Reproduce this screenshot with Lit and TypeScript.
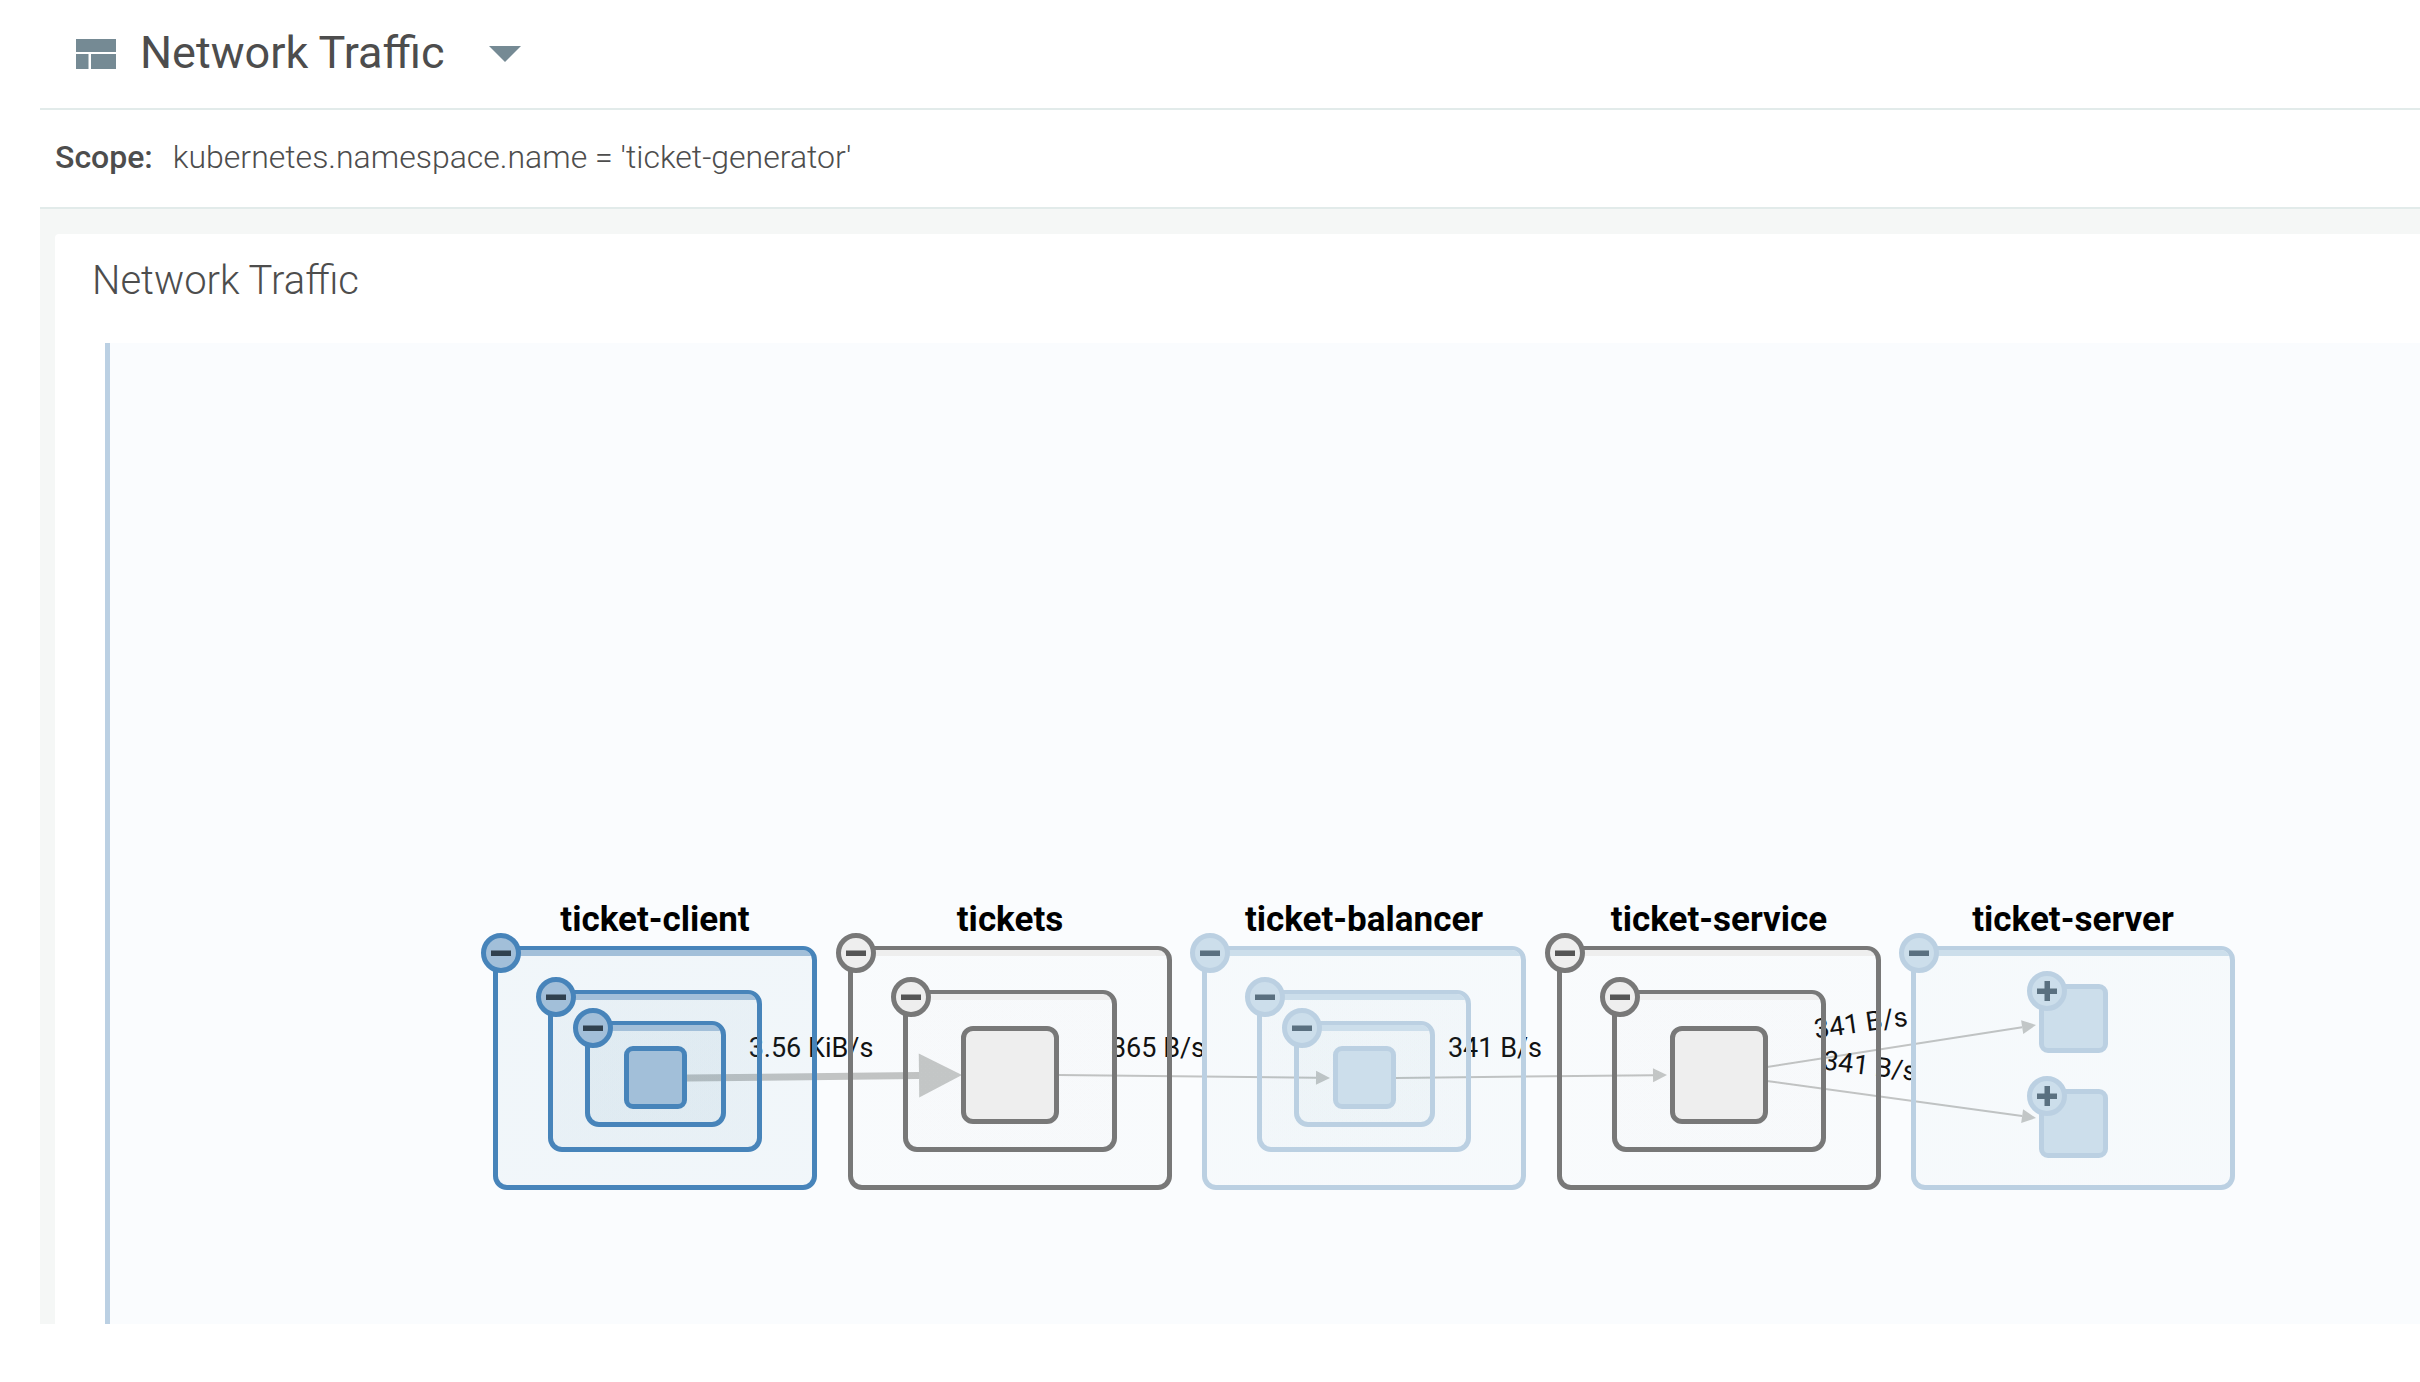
import { LitElement, html, svg, css, nothing } from "lit";
import { customElement, property, state } from "lit/decorators.js";
import { classMap } from "lit/directives/class-map.js";
import { styleMap } from "lit/directives/style-map.js";

type Tone = "strong" | "neutral" | "soft";

interface Box {
  kind: "frame" | "node";
  x: number;
  y: number;
  w: number;
  h: number;
  toggle?: "minus" | "plus";
}

interface Group {
  name: string;
  tone: Tone;
  x: number;
  boxes: Box[];
}

interface Edge {
  from: [number, number];
  to: [number, number];
  width: number;
  head: [number, number];
  label: string;
  at: [number, number];
  angle: number;
}

const frame = (x: number, y: number, w: number, h: number): Box => ({ kind: "frame", x, y, w, h, toggle: "minus" });
const node = (x: number, y: number, w: number, h: number, toggle?: "plus"): Box => ({ kind: "node", x, y, w, h, toggle });

const outer = frame(0, 0, 324, 244);
const middle = frame(55, 44, 214, 162);
const inner = frame(92, 75, 141, 106);
const small = node(131, 100, 63, 63);
const large = node(113, 80, 98, 98);

const groups: Group[] = [
  { name: "ticket-client", tone: "strong", x: 0, boxes: [outer, middle, inner, small] },
  { name: "tickets", tone: "neutral", x: 355, boxes: [outer, middle, large] },
  { name: "ticket-balancer", tone: "soft", x: 709, boxes: [outer, middle, inner, small] },
  { name: "ticket-service", tone: "neutral", x: 1064, boxes: [outer, middle, large] },
  { name: "ticket-server", tone: "soft", x: 1418, boxes: [outer, node(128, 38, 69, 69, "plus"), node(128, 143, 69, 69, "plus")] },
];

const edges: Edge[] = [
  { from: [194, 132], to: [469, 129], width: 7, head: [43, 22], label: "3.56 KiB/s", at: [318, 111], angle: 0 },
  { from: [565, 129], to: [837, 132], width: 2, head: [14, 7], label: "365 B/s", at: [665, 111], angle: 0 },
  { from: [903, 132], to: [1174, 129], width: 2, head: [14, 7], label: "341 B/s", at: [1002, 111], angle: 0 },
  { from: [1274, 121], to: [1543, 79], width: 2, head: [14, 7], label: "341 B/s", at: [1369, 86], angle: -8 },
  { from: [1274, 135], to: [1543, 172], width: 2, head: [14, 7], label: "341 B/s", at: [1376, 129], angle: 7 },
];

@customElement("traffic-box")
class TrafficBox extends LitElement {
  static styles = css`
    :host {
      position: absolute;
      box-sizing: border-box;
      display: block;
    }
    .shape {
      box-sizing: border-box;
      position: relative;
      width: 100%;
      height: 100%;
      border: 5px solid var(--stroke);
    }
    .frame {
      border-top-width: 4px;
      border-radius: 14px;
      background: linear-gradient(var(--solid) 6px, var(--wash) 6px);
      background-clip: padding-box;
    }
    .node {
      border-radius: 9px;
      background: var(--solid);
    }
    .large {
      border-radius: 12px;
    }
    .toggle {
      position: absolute;
      left: -12px;
      top: -13px;
      z-index: 1;
      box-sizing: border-box;
      width: 40px;
      height: 40px;
      padding: 0;
      display: grid;
      place-items: center;
      border: 5px solid var(--stroke);
      border-radius: 50%;
      background: var(--solid);
      cursor: pointer;
    }
    .mark {
      display: block;
      fill: var(--mark);
    }
  `;

  @property({ attribute: false }) box!: Box;
  @property() name = "";

  render() {
    const { kind, toggle, w } = this.box;
    return html`
      <div class=${classMap({ shape: true, [kind]: true, large: kind === "node" && w > 90 })}></div>
      ${toggle
        ? html`<button class="toggle" type="button" aria-label=${(toggle === "minus" ? "Collapse " : "Expand ") + this.name}>
            <svg class="mark" width="20" height="20" viewBox="0 0 20 20" aria-hidden="true">
              <rect x="0" y="7.5" width="20" height="5.5" />
              ${toggle === "plus" ? svg`<rect x="7.5" y="0" width="5.5" height="20" />` : nothing}
            </svg>
          </button>`
        : nothing}
    `;
  }
}

@customElement("traffic-map")
class TrafficMap extends LitElement {
  static styles = css`
    :host {
      position: relative;
      display: block;
      overflow: hidden;
      background: #fafcfe;
      border-left: 5px solid #bbd0e3;
    }
    .diagram {
      position: absolute;
      left: 383px;
      top: 603px;
    }
    .edges {
      position: absolute;
      left: 0;
      top: 0;
      overflow: visible;
    }
    .line {
      stroke: #c2c4c4;
    }
    .head {
      fill: #c5c8c8;
    }
    .rate {
      font: 400 27px Roboto, sans-serif;
      fill: #111;
      text-anchor: middle;
    }
    .group {
      position: absolute;
      top: 0;
      width: 324px;
      height: 244px;
    }
    .name {
      position: absolute;
      left: 0;
      right: 0;
      bottom: 100%;
      margin: 0 0 5px;
      font: 700 35px/42px Roboto, sans-serif;
      text-align: center;
      white-space: nowrap;
      color: #000;
    }
    .strong {
      --stroke: #4784ba;
      --solid: #a2bfd9;
      --wash: rgba(70, 135, 170, 0.05);
      --mark: #30414f;
    }
    .neutral {
      --stroke: #787878;
      --solid: #eeeeee;
      --wash: rgba(120, 120, 120, 0.01);
      --mark: #555555;
    }
    .soft {
      --stroke: #bbd0e2;
      --solid: #ccdeeb;
      --wash: rgba(70, 135, 160, 0.025);
      --mark: #5a7080;
    }
  `;

  private edge(e: Edge) {
    const dx = e.to[0] - e.from[0];
    const dy = e.to[1] - e.from[1];
    const len = Math.hypot(dx, dy);
    const turn = (Math.atan2(dy, dx) * 180) / Math.PI;
    const base = len - e.head[0];
    return svg`
      <g transform="translate(${e.from[0]} ${e.from[1]}) rotate(${turn})">
        <line class="line" x1="0" y1="0" x2=${base} y2="0" stroke-width=${e.width} />
        <path class="head" d="M${base} ${-e.head[1]}L${len} 0L${base} ${e.head[1]}Z" />
      </g>
      <text class="rate" transform="translate(${e.at[0]} ${e.at[1]}) rotate(${e.angle})">${e.label}</text>
    `;
  }

  render() {
    return html`
      <div class="diagram">
        <svg class="edges" width="1742" height="244" role="img" aria-label="Traffic rates">${edges.map((e) => this.edge(e))}</svg>
        ${groups.map(
          (g) => html`
            <section class=${classMap({ group: true, [g.tone]: true })} style=${styleMap({ left: g.x + "px" })}>
              <h3 class="name">${g.name}</h3>
              ${g.boxes.map(
                (b) => html`<traffic-box
                  .box=${b}
                  name=${g.name}
                  style=${styleMap({ left: b.x + "px", top: b.y + "px", width: b.w + "px", height: b.h + "px" })}
                ></traffic-box>`
              )}
            </section>
          `
        )}
      </div>
    `;
  }
}

@customElement("app-root")
class AppRoot extends LitElement {
  static styles = css`
    :host {
      display: flex;
      flex-direction: column;
      box-sizing: border-box;
      min-height: 100vh;
      padding: 0 0 58px 40px;
      background: #fff;
      color: #4d4d4d;
      font-family: Roboto, sans-serif;
    }
    .top {
      display: flex;
      align-items: center;
      height: 108px;
      padding-left: 36px;
      border-bottom: 2px solid #e2ebea;
      box-sizing: content-box;
    }
    .layout {
      display: block;
      margin-right: 24px;
      fill: #758a94;
    }
    .title {
      margin: 0 44px 2px 0;
      font-size: 45px;
      line-height: 52px;
      font-weight: 400;
    }
    .menu {
      padding: 0;
      border: 0;
      background: none;
      cursor: pointer;
    }
    .caret {
      display: block;
      fill: #758a94;
    }
    .scope {
      display: flex;
      align-items: center;
      gap: 20px;
      box-sizing: border-box;
      height: 99px;
      padding: 0 15px 4px;
      border-bottom: 2px solid #e2ebea;
      font-size: 32px;
      line-height: 40px;
    }
    .key {
      font-weight: 500;
    }
    .value {
      font-weight: 300;
    }
    .board {
      flex: 1;
      display: flex;
      background: #f5f7f6;
      padding: 25px 0 0 15px;
    }
    .panel {
      flex: 1;
      display: flex;
      flex-direction: column;
      background: #fff;
      border-top-left-radius: 4px;
    }
    .heading {
      margin: 0;
      padding: 23px 37px 38px;
      font-size: 40px;
      line-height: 48px;
      font-weight: 300;
    }
    .map {
      flex: 1;
      min-height: 900px;
      margin-left: 50px;
    }
  `;

  @state() private open = false;

  render() {
    return html`
      <header class="top">
        <svg class="layout" width="40" height="30" viewBox="0 0 40 30" aria-hidden="true">
          <rect x="0" y="0" width="40" height="13" />
          <rect x="0" y="15" width="12.5" height="15" />
          <rect x="15" y="15" width="25" height="15" />
        </svg>
        <h1 class="title">Network Traffic</h1>
        <button
          class="menu"
          type="button"
          aria-label="Choose dashboard"
          aria-expanded=${this.open ? "true" : "false"}
          @click=${() => (this.open = !this.open)}
        >
          <svg class="caret" width="32" height="16" viewBox="0 0 32 16" aria-hidden="true"><path d="M0 0H32L16 16Z" /></svg>
        </button>
      </header>
      <div class="scope">
        <span class="key">Scope:</span>
        <span class="value">kubernetes.namespace.name = 'ticket-generator'</span>
      </div>
      <main class="board">
        <section class="panel">
          <h2 class="heading">Network Traffic</h2>
          <traffic-map class="map"></traffic-map>
        </section>
      </main>
    `;
  }
}
